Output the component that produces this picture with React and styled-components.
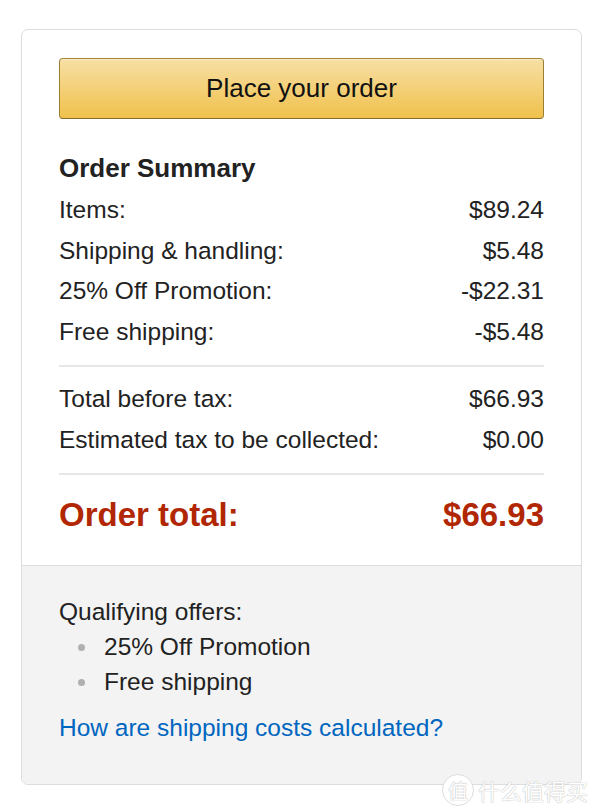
import styled, { createGlobalStyle } from 'styled-components';

const GlobalStyle = createGlobalStyle`
  html, body {
    margin: 0;
    padding: 0;
    background: #fff;
  }
  body {
    font-family: 'Liberation Sans', Arial, sans-serif;
    color: #111;
  }
`;

const summary = [
  { label: 'Items:', value: '$89.24' },
  { label: 'Shipping & handling:', value: '$5.48' },
  { label: '25% Off Promotion:', value: '-$22.31' },
  { label: 'Free shipping:', value: '-$5.48' },
];

const taxes = [
  { label: 'Total before tax:', value: '$66.93' },
  { label: 'Estimated tax to be collected:', value: '$0.00' },
];

const offers = ['25% Off Promotion', 'Free shipping'];

const App = () => {
  return (
    <Page>
      <GlobalStyle />
      <Card>
        <Main>
          <OrderButton type="button">Place your order</OrderButton>
          <Heading>Order Summary</Heading>
          <Rows>
            {summary.map((r) => (
              <Row key={r.label}>
                <span>{r.label}</span>
                <span>{r.value}</span>
              </Row>
            ))}
          </Rows>
          <Divider />
          <Rows>
            {taxes.map((r) => (
              <Row key={r.label}>
                <span>{r.label}</span>
                <span>{r.value}</span>
              </Row>
            ))}
          </Rows>
          <Divider />
          <TotalRow>
            <span>Order total:</span>
            <span>$66.93</span>
          </TotalRow>
        </Main>
        <Offers>
          <OffersTitle>Qualifying offers:</OffersTitle>
          <OfferList>
            {offers.map((o) => (
              <Offer key={o}>{o}</Offer>
            ))}
          </OfferList>
          <Link href="#">How are shipping costs calculated?</Link>
        </Offers>
      </Card>
      <Watermark>
        <Seal>值</Seal>
        <span>什么值得买</span>
      </Watermark>
    </Page>
  );
};

const Page = styled.div`
  position: relative;
  width: 600px;
  height: 808px;
  padding: 29px 19px 0 21px;
  box-sizing: border-box;
`;

const Card = styled.div`
  box-sizing: border-box;
  width: 561px;
  border: 1px solid #dddddd;
  border-radius: 7px;
  overflow: hidden;
  background: #fff;
`;

const Main = styled.div`
  padding: 28px 37px 28px 37px;
`;

const OrderButton = styled.button`
  display: block;
  width: 100%;
  height: 61px;
  margin: 0;
  padding: 0;
  border: 1px solid;
  border-color: #a88734 #9c7e31 #846a29;
  border-radius: 4px;
  background: linear-gradient(to bottom, #f7dfa5, #f0c14b);
  box-shadow: inset 0 1px 0 rgba(255, 255, 255, 0.4);
  font-family: 'Liberation Sans', Arial, sans-serif;
  font-size: 26px;
  color: #111;
  cursor: pointer;
`;

const Heading = styled.h3`
  margin: 31px 0 4px 0;
  font-size: 26px;
  line-height: 36px;
  font-weight: 700;
  color: #222;
`;

const Rows = styled.div`
  display: flex;
  flex-direction: column;
`;

const Row = styled.div`
  display: flex;
  justify-content: space-between;
  font-size: 24.5px;
  line-height: 40.5px;
  color: #222;
`;

const Divider = styled.hr`
  margin: 13px 0 12px 0;
  border: 0;
  border-top: 2px solid #e7e7e7;
`;

const TotalRow = styled.div`
  display: flex;
  justify-content: space-between;
  margin-top: 18px;
  font-size: 33px;
  line-height: 44px;
  font-weight: 700;
  color: #b12704;
`;

const Offers = styled.div`
  background: #f3f3f3;
  border-top: 1px solid #dddddd;
  padding: 28px 37px 39px 37px;
  font-size: 24.5px;
  line-height: 35px;
`;

const OffersTitle = styled.div`
  color: #222;
`;

const OfferList = styled.ul`
  margin: 0;
  padding: 0 0 0 45px;
  list-style: none;
`;

const Offer = styled.li`
  position: relative;
  color: #222;

  &::before {
    content: '';
    position: absolute;
    left: -26px;
    top: 15px;
    width: 7px;
    height: 7px;
    border-radius: 50%;
    background: #b0b0b0;
  }
`;

const Link = styled.a`
  display: block;
  margin-top: 11px;
  color: #0066c0;
  text-decoration: none;
`;

const Watermark = styled.div`
  position: absolute;
  right: 12px;
  bottom: 2px;
  display: flex;
  align-items: center;
  gap: 4px;
  font-family: 'Noto Sans CJK SC', sans-serif;
  font-size: 22px;
  color: #fff;
  text-shadow: 0 0 1px #bbb, 0 0 1px #bbb;
`;

const Seal = styled.span`
  display: inline-flex;
  align-items: center;
  justify-content: center;
  width: 30px;
  height: 30px;
  border-radius: 50%;
  border: 1px solid #ddd;
  background: #fff;
  color: #fff;
  font-size: 20px;
`;

export default App;
